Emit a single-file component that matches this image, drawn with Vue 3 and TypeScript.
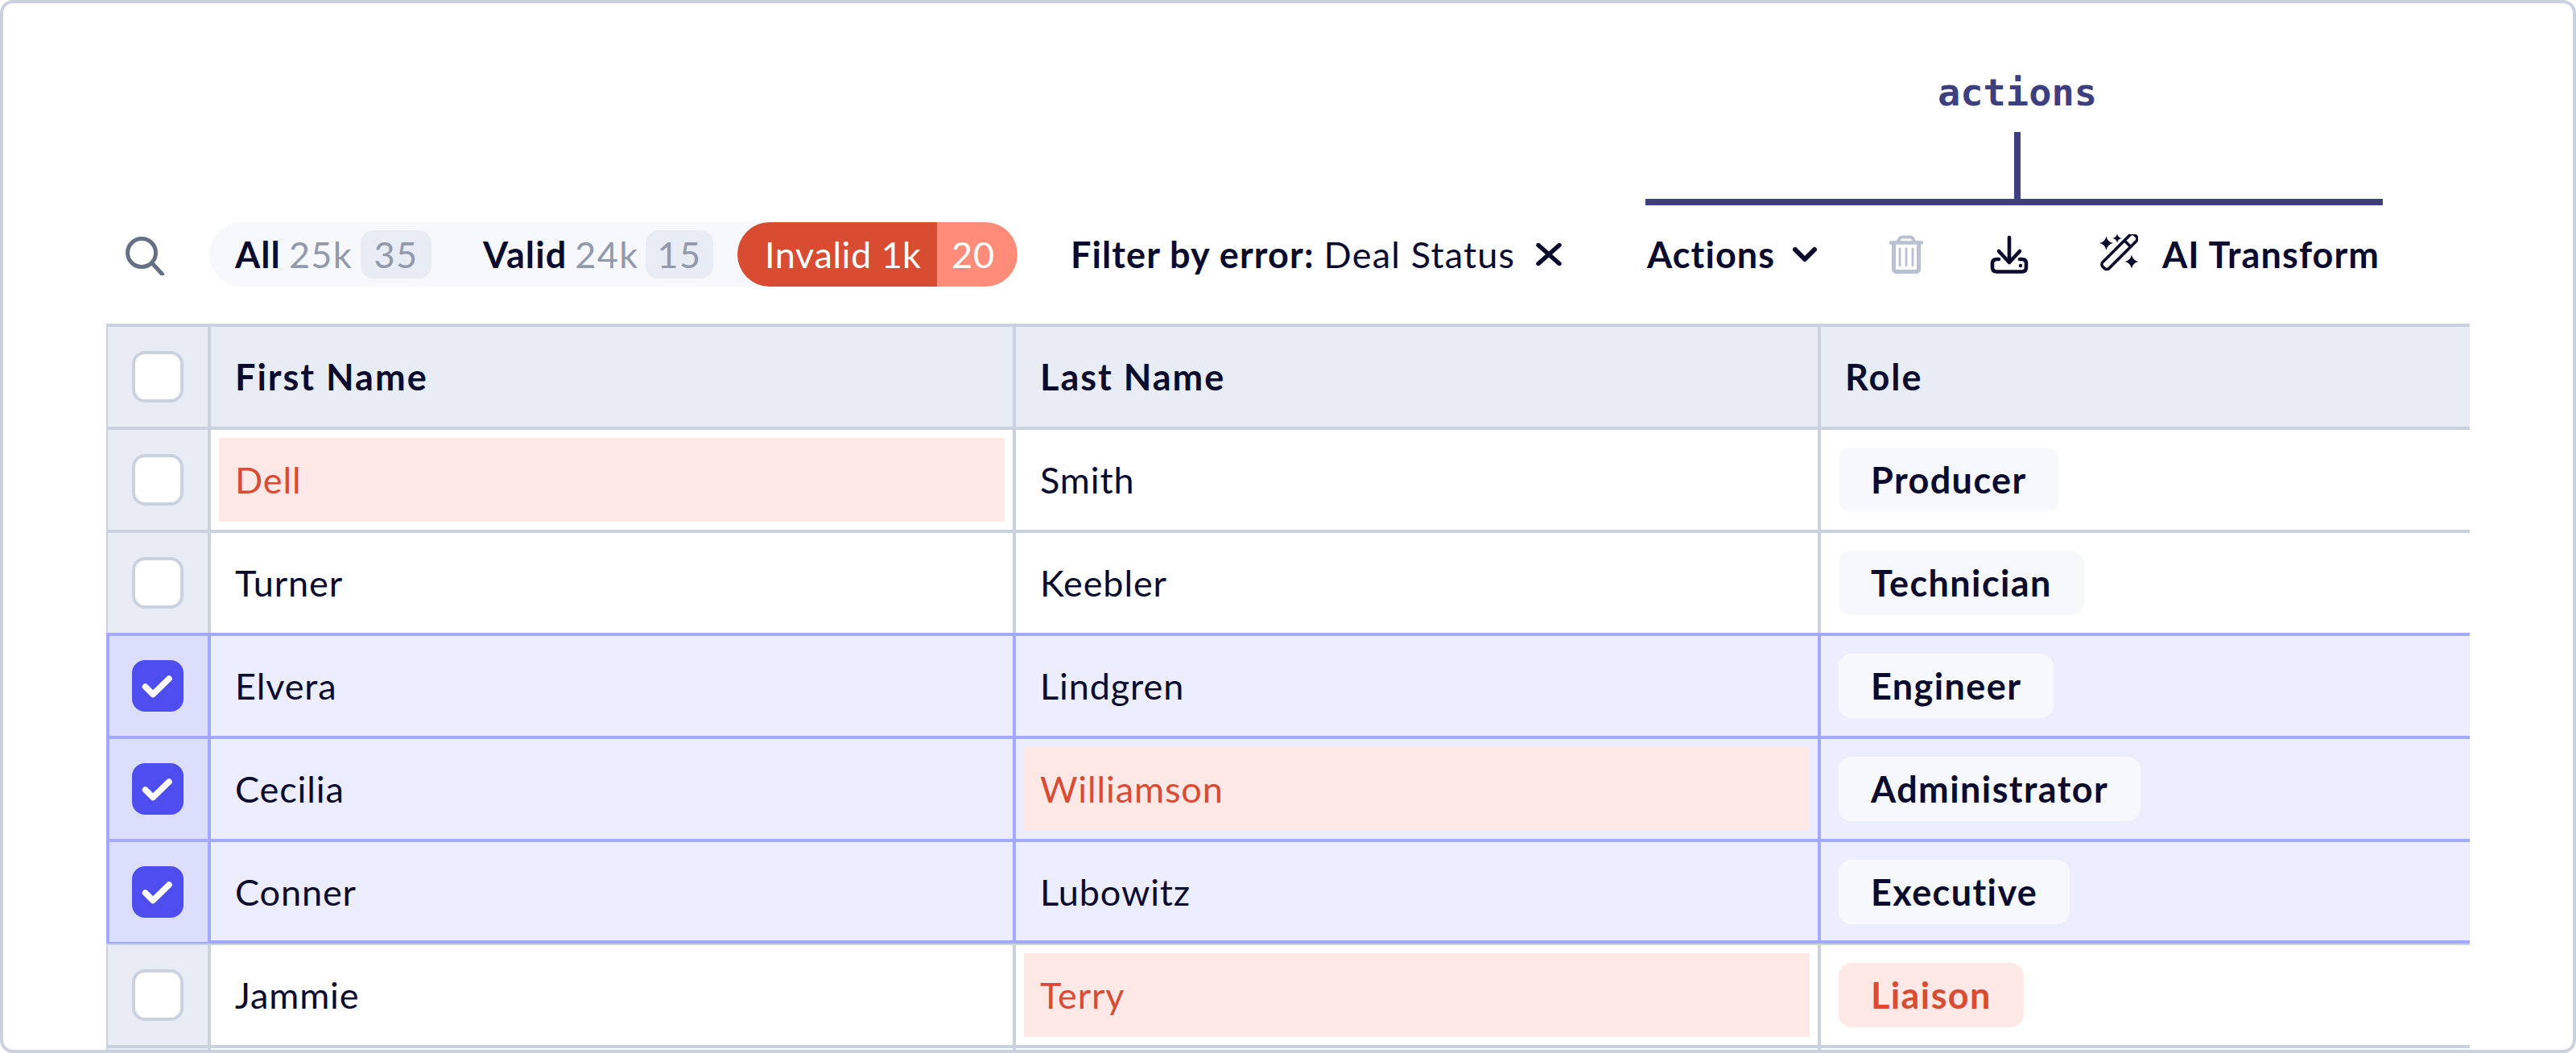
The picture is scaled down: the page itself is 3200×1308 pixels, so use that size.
<script setup lang="ts">
interface Row {
  first: string;
  last: string;
  role: string;
  firstBad?: boolean;
  lastBad?: boolean;
  roleBad?: boolean;
  selected?: boolean;
  nextSelected?: boolean;
  lastSelected?: boolean;
  afterSelected?: boolean;
}

const rows: Row[] = [
  { first: 'Dell', last: 'Smith', role: 'Producer', firstBad: true },
  { first: 'Turner', last: 'Keebler', role: 'Technician', nextSelected: true },
  { first: 'Elvera', last: 'Lindgren', role: 'Engineer', selected: true },
  { first: 'Cecilia', last: 'Williamson', role: 'Administrator', selected: true, lastBad: true },
  { first: 'Conner', last: 'Lubowitz', role: 'Executive', selected: true, lastSelected: true },
  { first: 'Jammie', last: 'Terry', role: 'Liaison', lastBad: true, roleBad: true, afterSelected: true },
];

// four point sparkle for the wand icon
function star(x: number, y: number, r: number): string {
  const k = r * 0.18;
  return `M${x} ${y - r}Q${x + k} ${y - k} ${x + r} ${y}Q${x + k} ${y + k} ${x} ${y + r}Q${x - k} ${y + k} ${x - r} ${y}Q${x - k} ${y - k} ${x} ${y - r}Z`;
}
</script>

<template>
  <div class="frame">
    <div class="toolbar">
      <svg class="search" width="48" height="48" viewBox="0 0 48 48" fill="none">
        <circle cx="20" cy="20" r="17.5" stroke="#667085" stroke-width="5" />
        <path d="M33 33L45.5 46.5" stroke="#667085" stroke-width="5" stroke-linecap="round" />
      </svg>

      <div class="tabs">
        <div class="tab tab-all">
          <b>All</b><span class="muted">25k</span><span class="chip chip-35">35</span>
        </div>
        <div class="tab tab-valid">
          <b>Valid</b><span class="muted">24k</span><span class="chip chip-15">15</span>
        </div>
        <div class="tab-invalid">
          <div class="invalid-main"><b>Invalid</b><span>1k</span></div>
          <div class="invalid-count">20</div>
        </div>
      </div>

      <div class="filter">
        <b>Filter by error:</b><span>Deal Status</span>
        <svg class="close" width="32" height="28" viewBox="0 0 32 28" fill="none">
          <path d="M3 2.5L29 25.5M29 2.5L3 25.5" stroke="#0b0b2e" stroke-width="5.5" stroke-linecap="round" />
        </svg>
      </div>

      <div class="actions">
        <div class="note">actions</div>
        <div class="stem"></div>
        <div class="bar"></div>
        <div class="action-row">
          <div class="action-menu">
            <b>Actions</b>
            <svg width="30" height="18" viewBox="0 0 30 18" fill="none">
              <path d="M3 3L15 15L27 3" stroke="#0b0b2e" stroke-width="6" stroke-linecap="round" stroke-linejoin="round" />
            </svg>
          </div>
          <svg class="trash" width="42" height="48" viewBox="0 0 42 48" fill="none" stroke="#b8c0d2" stroke-linecap="round" stroke-linejoin="round">
            <path d="M2 9.5H40" stroke-width="4.5" />
            <path d="M10 9.5L13 4Q14 2.5 16 2.5H26Q28 2.5 29 4L32 9.5" stroke-width="4" />
            <path d="M5.5 9.5V42Q5.5 45.5 9.5 45.5H32.5Q36.5 45.5 36.5 42V9.5" stroke-width="5" />
            <path d="M13 17V38M21 17V38M29 17V38" stroke-width="2.8" />
          </svg>
          <svg class="download" width="48" height="48" viewBox="0 0 48 48" fill="none" stroke="#0b0b2e" stroke-width="4.6" stroke-linecap="round" stroke-linejoin="round">
            <path d="M24 3V34M11 20L24 34L37 20" />
            <path d="M11 30H8.5Q3 30 3 35V40Q3 45.5 8.5 45.5H39.5Q45 45.5 45 40V35Q45 30 39.5 30H37" />
            <circle cx="38" cy="38" r="2.2" fill="#0b0b2e" stroke="none" />
          </svg>
          <div class="transform">
            <svg class="wand" width="48" height="46" viewBox="0 0 48 46" fill="none">
              <g transform="rotate(-45 25 21.5)">
                <rect x="-3" y="16" width="56" height="11" rx="4" stroke="#0b0b2e" stroke-width="3.6" />
                <path d="M39 16V27" stroke="#0b0b2e" stroke-width="3.6" />
              </g>
              <path :d="star(8.5, 11, 8.5)" fill="#0b0b2e" />
              <path :d="star(22, 5, 5.5)" fill="#0b0b2e" />
              <path :d="star(40, 34, 8.5)" fill="#0b0b2e" />
            </svg>
            <b>AI Transform</b>
          </div>
        </div>
      </div>
    </div>

    <div class="table">
      <div class="row head">
        <div class="cell check"><span class="box"></span></div>
        <div class="cell name">First Name</div>
        <div class="cell name">Last Name</div>
        <div class="cell name last-col">Role</div>
      </div>

      <div
        v-for="row in rows"
        :key="row.first"
        class="row"
        :class="{
          selected: row.selected,
          'next-selected': row.nextSelected,
          'last-selected': row.lastSelected,
          'after-selected': row.afterSelected,
        }"
      >
        <div class="cell check">
          <span class="box" :class="{ on: row.selected }">
            <svg v-if="row.selected" width="64" height="64" viewBox="0 0 64 64" fill="none">
              <path d="M16.5 33L26 42.5L46 23" stroke="#fff" stroke-width="7.5" stroke-linecap="round" stroke-linejoin="round" />
            </svg>
          </span>
        </div>
        <div class="cell text">
          <div class="val" :class="{ bad: row.firstBad }">{{ row.first }}</div>
        </div>
        <div class="cell text">
          <div class="val" :class="{ bad: row.lastBad }">{{ row.last }}</div>
        </div>
        <div class="cell role last-col">
          <span class="pill" :class="{ bad: row.roleBad }">{{ row.role }}</span>
        </div>
      </div>

      <div class="row">
        <div class="cell check"></div>
        <div class="cell"></div>
        <div class="cell"></div>
        <div class="cell last-col"></div>
      </div>
    </div>
  </div>
</template>

<style>
html,
body {
  margin: 0;
  background: #fff;
}
</style>

<style scoped>
.frame {
  box-sizing: border-box;
  width: 3200px;
  height: 1308px;
  padding: 86px 0 0 128px;
  border: 4px solid #cbd2df;
  border-radius: 16px;
  overflow: hidden;
  background: #fff;
  color: #0b0b2e;
  font-family: Lato, "Liberation Sans", sans-serif;
  font-size: 45px;
  letter-spacing: 0.9px;
}

b {
  font-weight: 700;
  letter-spacing: 1.1px;
}

.toolbar {
  display: flex;
  align-items: flex-end;
  width: 2936px;
  height: 266px;
  padding-left: 24px;
  box-sizing: border-box;
}

.search {
  margin: 0 56px 14px 0;
  flex: none;
}

.tabs {
  display: flex;
  width: 1004px;
  height: 80px;
  border-radius: 40px;
  background: #f7f8fc;
  flex: none;
}

.tab {
  display: flex;
  align-items: center;
  line-height: 80px;
  box-sizing: border-box;
}

.tab-all {
  width: 308px;
  padding-left: 32px;
}

.tab-valid {
  width: 348px;
  padding-left: 32px;
}

.muted {
  flex: 1;
  margin-left: 10px;
  color: #9299ab;
  letter-spacing: 1.3px;
}

.chip {
  flex: none;
  height: 60px;
  border-radius: 16px;
  background: #e8ecf4;
  color: #9299ab;
  letter-spacing: 1.5px;
  line-height: 60px;
  text-align: center;
}

.chip-35 {
  width: 88px;
  margin-right: 32px;
}

.chip-15 {
  width: 84px;
  margin-right: 30px;
}

.tab-invalid {
  display: flex;
  width: 348px;
  height: 80px;
  border-radius: 40px;
  overflow: hidden;
  color: #fff;
  line-height: 80px;
}

.invalid-main {
  display: flex;
  gap: 12px;
  width: 248px;
  padding-left: 34px;
  box-sizing: border-box;
  background: #d84c31;
}

.invalid-main b {
  font-weight: 400;
  letter-spacing: 0.6px;
}

.invalid-main span {
  letter-spacing: 0;
}

.invalid-count {
  flex: 1;
  padding-left: 18px;
  background: #ff8c78;
}

.filter {
  display: flex;
  align-items: center;
  height: 80px;
  margin-left: 66px;
  white-space: nowrap;
}

.filter span {
  margin-left: 12px;
  letter-spacing: 1.2px;
}

.close {
  margin-left: 26px;
}

.actions {
  display: flex;
  flex-direction: column;
  align-items: center;
  width: 916px;
  margin-left: auto;
  margin-right: 108px;
  flex: none;
}

.note {
  height: 50px;
  margin-bottom: 24px;
  margin-left: 8px;
  color: #3d3f7f;
  font-family: "DejaVu Sans Mono", monospace;
  font-size: 47px;
  font-weight: 700;
  line-height: 50px;
  letter-spacing: 0;
}

.stem {
  width: 8px;
  height: 83px;
  margin-left: 8px;
  background: #3d3f7f;
}

.bar {
  width: 100%;
  height: 8px;
  margin-bottom: 21px;
  background: #3d3f7f;
}

.action-row {
  display: flex;
  align-items: center;
  width: 100%;
  height: 80px;
}

.action-menu {
  display: flex;
  align-items: center;
  gap: 22px;
  width: 303px;
  padding-left: 2px;
  box-sizing: border-box;
}

.trash {
  flex: none;
}

.download {
  margin-left: 83px;
  flex: none;
}

.transform {
  display: flex;
  align-items: center;
  gap: 30px;
  margin-left: 88px;
  white-space: nowrap;
}

.wand {
  margin-top: -5px;
}

.table {
  width: 2936px;
  margin-top: 46px;
}

.row {
  display: grid;
  grid-template-columns: 130px 1000px 1000px 806px;
  height: 128px;
  box-sizing: border-box;
  border-bottom: 4px solid #cbd2df;
}

.row.head {
  height: 132px;
  border-top: 4px solid #cbd2df;
  background: #e8ecf4;
}

.cell {
  box-sizing: border-box;
  min-width: 0;
  border-right: 4px solid #cbd2df;
}

.last-col {
  border-right: 0;
}

.check {
  padding: 30px 0 0 32px;
  background: #e8ecf4;
  box-shadow: inset 2px 0 0 #cbd2df;
}

.name {
  padding-left: 30px;
  font-weight: 700;
  letter-spacing: 2px;
  line-height: 124px;
}

.text {
  padding: 10px;
}

.val {
  height: 104px;
  padding-left: 20px;
  line-height: 104px;
}

.val.bad {
  background: #fee9e7;
  color: #d94c33;
}

.role {
  padding: 22px 0 0 22px;
}

.pill {
  display: inline-block;
  height: 80px;
  padding: 0 40px;
  border-radius: 16px;
  background: #f7f8fc;
  font-weight: 700;
  letter-spacing: 1.4px;
  line-height: 80px;
}

.pill.bad {
  background: #fee9e7;
  color: #d94c33;
}

.box {
  display: block;
  box-sizing: border-box;
  width: 64px;
  height: 64px;
  border: 4px solid #cbd2df;
  border-radius: 16px;
  background: #fff;
}

.box.on {
  border: 0;
  background: #4d4df0;
}

.box svg {
  display: block;
}

.row.selected {
  background: #ecedff;
  border-bottom-color: #a3a9ff;
}

.row.selected .cell {
  border-right-color: #a3a9ff;
}

.row.selected .last-col {
  border-right: 0;
}

.row.selected .check {
  background: #dcdffc;
  box-shadow: inset 4px 0 0 #a3a9ff;
}

.row.next-selected {
  border-bottom-color: #a3a9ff;
}

.row.last-selected {
  height: 126px;
}

.row.after-selected {
  height: 130px;
  border-top: 2px solid #cbd2df;
}
</style>
